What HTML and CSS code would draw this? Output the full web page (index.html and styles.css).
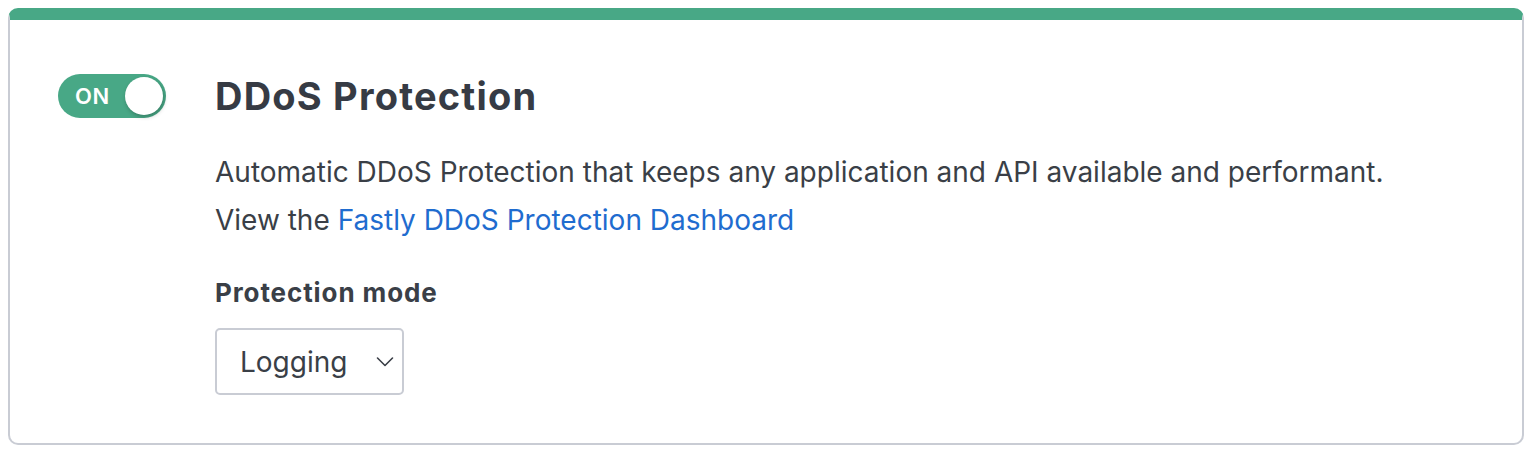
FILE: index.html
```html
<!DOCTYPE html>
<html>
<head>
<meta charset="utf-8">
<link rel="stylesheet" href="styles.css">
</head>
<body>
<div class="card">
  <div class="toggle">
    <span class="toggle-label">ON</span>
    <span class="toggle-knob"></span>
  </div>
  <div class="content">
    <h2 class="title">DDoS Protection</h2>
    <p class="desc">Automatic DDoS Protection that keeps any application and API available and performant.<br>View the <a class="link" href="#">Fastly DDoS Protection Dashboard</a></p>
    <div class="label">Protection mode</div>
    <div class="select">
      <span class="select-value">Logging</span>
      <svg class="chevron" width="18" height="12" viewBox="0 0 18 12"><path d="M1.5 2 L9 9.5 L16.5 2" fill="none" stroke="#3a3f47" stroke-width="1.6" stroke-linecap="round" stroke-linejoin="round"/></svg>
    </div>
  </div>
</div>
</body>
</html>
```
FILE: styles.css
```css
* { box-sizing: border-box; }
body {
  margin: 8px;
  background: #ffffff;
  font-family: Inter, "Noto Sans", sans-serif;
  color: #3a3f47;
}
.card {
  height: 437px;
  border: 2px solid #c9ccd4;
  border-top: 12px solid #48a886;
  border-radius: 10px;
  padding: 54px 48px 0 48px;
  display: flex;
  gap: 49px;
}
.toggle {
  position: relative;
  flex: none;
  width: 108px;
  height: 44px;
  border-radius: 22px;
  background: #48a886;
  display: flex;
  align-items: center;
  padding-left: 17px;
}
.toggle-label {
  color: #ffffff;
  font-weight: 600;
  font-size: 22px;
  letter-spacing: 0.5px;
}
.toggle-knob {
  position: absolute;
  right: 3px;
  top: 3px;
  width: 38px;
  height: 38px;
  border-radius: 50%;
  background: #ffffff;
  box-shadow: 1px 2px 4px rgba(0, 0, 0, 0.25);
}
.content {
  display: flex;
  flex-direction: column;
  align-items: flex-start;
}
.title {
  margin: 0;
  font-size: 38px;
  line-height: 44px;
  font-weight: 700;
  letter-spacing: 1.2px;
  color: #363b44;
}
.desc {
  margin: 30px 0 0 0;
  font-size: 28px;
  line-height: 48px;
}
.link {
  color: #1f6ccf;
  text-decoration: none;
}
.label {
  margin-top: 31px;
  font-size: 26px;
  line-height: 36px;
  font-weight: 700;
  letter-spacing: 0.9px;
}
.select {
  margin-top: 17px;
  width: 189px;
  height: 67px;
  border: 2px solid #c9ccd4;
  border-radius: 5px;
  display: flex;
  align-items: center;
  justify-content: space-between;
  padding: 0 8px 0 23px;
}
.select-value {
  font-size: 28px;
}
.chevron { display: block; }
```
